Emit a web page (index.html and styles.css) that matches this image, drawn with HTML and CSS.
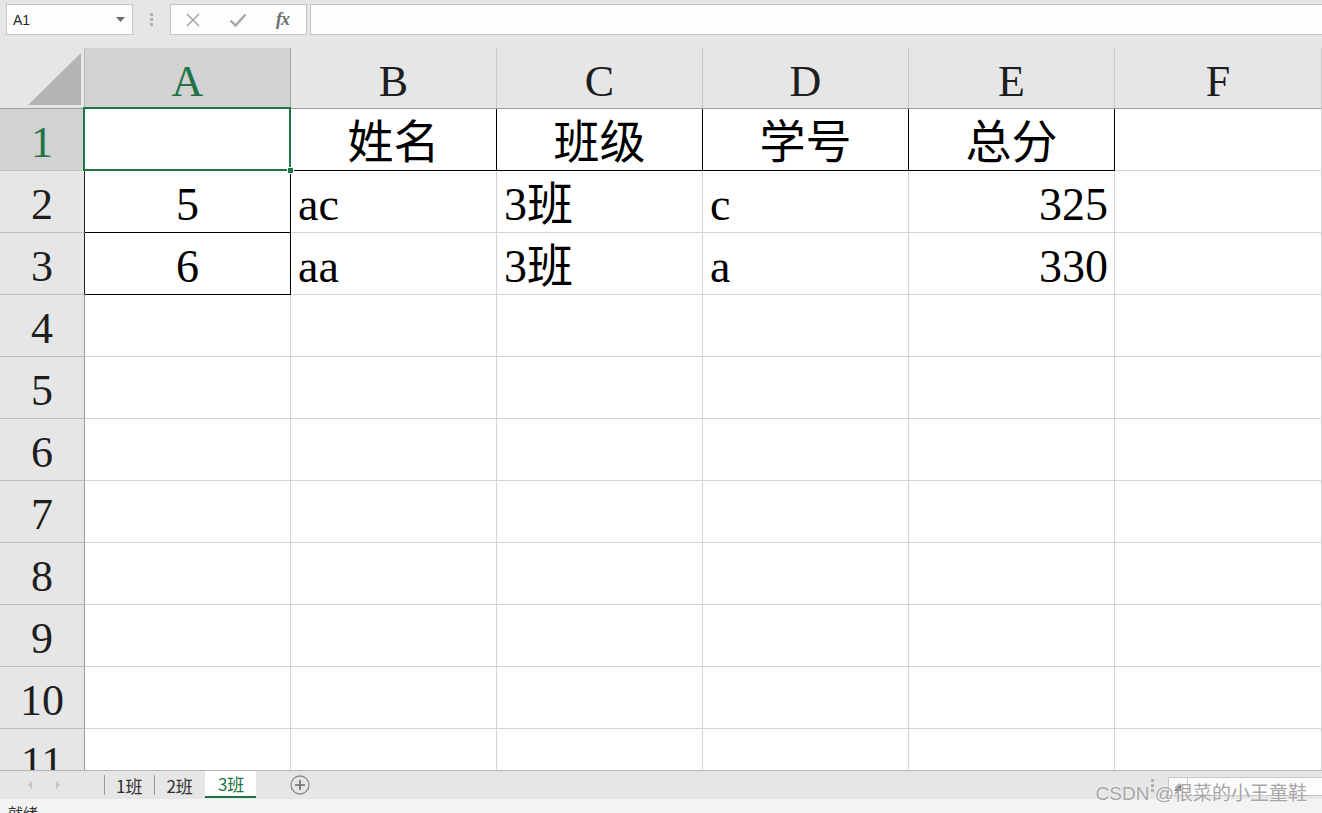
FILE: index.html
```html
<!DOCTYPE html>
<html lang="zh">
<head>
<meta charset="utf-8">
<title>Excel</title>
<link rel="stylesheet" href="styles.css">
</head>
<body>
<div class="app">
  <div class="toolbar">
    <div class="namebox">
      <span class="name">A1</span>
      <svg class="dd" width="9" height="5" viewBox="0 0 9 5"><path d="M0 0 H9 L4.5 5 Z" fill="#6b6b6b"/></svg>
    </div>
    <div class="grip"><i></i><i></i><i></i></div>
    <div class="fxbox">
      <svg width="16" height="16" viewBox="0 0 16 16"><path d="M2 2 L14 14 M14 2 L2 14" stroke="#a6a6a6" stroke-width="1.6" fill="none"/></svg>
      <svg width="18" height="16" viewBox="0 0 18 16"><path d="M1.5 8.5 L6.5 13.5 L16.5 2.5" stroke="#a6a6a6" stroke-width="2.4" fill="none"/></svg>
      <span class="fx">fx</span>
    </div>
    <div class="formula"></div>
  </div>

  <div class="sheet">
    <div class="corner"><svg width="84" height="61" viewBox="0 0 84 61"><polygon points="28,57 81,57 81,5" fill="#b4b4b4"/></svg></div>
    <div class="ch ch-sel">A</div><div class="ch">B</div><div class="ch">C</div><div class="ch">D</div><div class="ch">E</div><div class="ch">F</div>

    <div class="rh rh-sel">1</div>
    <div class="c a1 bk-b"><div class="sel"><div class="handle"></div></div></div>
    <div class="c center bk-r bk-b">姓名</div><div class="c center bk-r bk-b">班级</div><div class="c center bk-r bk-b">学号</div><div class="c center bk-r bk-b">总分</div><div class="c"></div>

    <div class="rh rh-bk">2</div>
    <div class="c center bk-r bk-b">5</div><div class="c">ac</div><div class="c">3班</div><div class="c">c</div><div class="c ra">325</div><div class="c"></div>

    <div class="rh rh-bk">3</div>
    <div class="c center bk-r bk-b">6</div><div class="c">aa</div><div class="c">3班</div><div class="c">a</div><div class="c ra">330</div><div class="c"></div>

    <div class="rh">4</div><div class="c"></div><div class="c"></div><div class="c"></div><div class="c"></div><div class="c"></div><div class="c"></div>
    <div class="rh">5</div><div class="c"></div><div class="c"></div><div class="c"></div><div class="c"></div><div class="c"></div><div class="c"></div>
    <div class="rh">6</div><div class="c"></div><div class="c"></div><div class="c"></div><div class="c"></div><div class="c"></div><div class="c"></div>
    <div class="rh">7</div><div class="c"></div><div class="c"></div><div class="c"></div><div class="c"></div><div class="c"></div><div class="c"></div>
    <div class="rh">8</div><div class="c"></div><div class="c"></div><div class="c"></div><div class="c"></div><div class="c"></div><div class="c"></div>
    <div class="rh">9</div><div class="c"></div><div class="c"></div><div class="c"></div><div class="c"></div><div class="c"></div><div class="c"></div>
    <div class="rh">10</div><div class="c"></div><div class="c"></div><div class="c"></div><div class="c"></div><div class="c"></div><div class="c"></div>
    <div class="rh">11</div><div class="c"></div><div class="c"></div><div class="c"></div><div class="c"></div><div class="c"></div><div class="c"></div>
  </div>

  <div class="tabbar">
    <div class="nav">
      <svg width="8" height="10" viewBox="0 0 8 10"><path d="M6 1 L2 5 L6 9 Z" fill="#c4c4c4"/></svg>
      <svg width="8" height="10" viewBox="0 0 8 10"><path d="M2 1 L6 5 L2 9 Z" fill="#c4c4c4"/></svg>
    </div>
    <span class="sep"></span>
    <div class="tab">1班</div>
    <span class="sep"></span>
    <div class="tab">2班</div>
    <div class="tab active">3班</div>
    <svg class="plus" width="20" height="20" viewBox="0 0 20 20"><circle cx="10" cy="10" r="9" fill="none" stroke="#8a8a8a" stroke-width="1.3"/><path d="M10 5 V15 M5 10 H15" stroke="#6a6a6a" stroke-width="1.6"/></svg>
    <div class="tabtail">
      <div class="vgrip"><i></i><i></i><i></i></div>
      <div class="hscroll">
        <div class="hbtn"><svg width="8" height="8" viewBox="0 0 8 8"><path d="M7 0 L7 7 L0 7 Z" fill="#555"/></svg></div>
      </div>
    </div>
    <div class="watermark">CSDN @很菜的小王童鞋</div>
  </div>

  <div class="status">就绪</div>
</div>
</body>
</html>
```

FILE: styles.css
```css
* { box-sizing: border-box; }
html, body { margin: 0; padding: 0; }
body {
  background: #e6e6e6;
  font-family: "Liberation Sans", "Noto Sans CJK SC", sans-serif;
  width: 1322px;
  height: 813px;
  overflow: hidden;
}
.app { display: flex; flex-direction: column; height: 813px; }

/* toolbar */
.toolbar {
  height: 48px;
  display: flex;
  align-items: flex-start;
  padding: 4px 0 0 6px;
  flex: none;
}
.namebox {
  width: 127px;
  height: 31px;
  background: #fdfdfd;
  border: 1px solid #c6c6c6;
  display: flex;
  align-items: center;
  justify-content: space-between;
  padding: 0 7px 0 6px;
}
.name { font-size: 14px; color: #262626; }
.grip {
  width: 37px;
  height: 31px;
  display: flex;
  flex-direction: column;
  align-items: center;
  justify-content: center;
  gap: 2px;
}
.grip i, .vgrip i { display: block; width: 3px; height: 3px; background: #b0b0b0; }
.fxbox {
  width: 137px;
  height: 31px;
  background: #fdfdfd;
  border: 1px solid #c6c6c6;
  display: flex;
  align-items: center;
  gap: 28px;
  padding-left: 14px;
}
.fx {
  font-family: "Liberation Serif", serif;
  font-style: italic;
  font-weight: bold;
  font-size: 18px;
  color: #6e6e6e;
  margin-left: 1px;
  letter-spacing: -1px;
}
.formula {
  flex: 1;
  height: 31px;
  margin-left: 3px;
  margin-right: -2px;
  background: #fdfdfd;
  border: 1px solid #c6c6c6;
}

/* sheet */
.sheet {
  flex: none;
  height: 722px;
  overflow: hidden;
  display: grid;
  grid-template-columns: 85px repeat(5, 206px) 1fr;
  grid-template-rows: 61px repeat(11, 62px);
  background: #fff;
  font-family: "Liberation Serif", "Noto Sans CJK SC", serif;
}
.corner {
  background: #e6e6e6;
  border-right: 1px solid #b8b8b8;
  border-bottom: 1px solid #9e9e9e;
}
.corner svg { display: block; }
.ch {
  background: #e6e6e6;
  border-right: 1px solid #c8c8c8;
  border-bottom: 1px solid #9e9e9e;
  display: flex;
  align-items: flex-end;
  justify-content: center;
  font-size: 44px;
  line-height: 1;
  padding-bottom: 4px;
  color: #1e1e1e;
}
.ch-sel { background: #d2d2d2; color: #217346; border-right-color: #a8a8a8; }
.rh {
  background: #e6e6e6;
  border-right: 1px solid #9e9e9e;
  border-bottom: 1px solid #c0c0c0;
  display: flex;
  align-items: flex-end;
  justify-content: center;
  font-size: 44px;
  line-height: 1;
  padding-bottom: 5px;
  color: #1e1e1e;
}
.rh-sel { background: #d2d2d2; color: #217346; }
.rh-bk { border-right-color: #222; }
.c {
  border-right: 1px solid #d4d4d4;
  border-bottom: 1px solid #d4d4d4;
  display: flex;
  align-items: flex-end;
  font-size: 46px;
  line-height: 1;
  padding: 0 6px 4px 7px;
  color: #000;
  white-space: nowrap;
}
.c.center { justify-content: center; padding-left: 0; padding-right: 0; }
.c.ra { justify-content: flex-end; }
.bk-r { border-right-color: #000; }
.bk-b { border-bottom-color: #000; }
.a1 { position: relative; }
.sel {
  position: absolute;
  top: -2px;
  left: -2px;
  right: -1px;
  bottom: -1px;
  border: 2px solid #217346;
  z-index: 2;
}
.handle {
  position: absolute;
  right: -5px;
  bottom: -5px;
  width: 7px;
  height: 7px;
  background: #217346;
  border: 1px solid #fff;
}

/* tab bar */
.tabbar {
  position: relative;
  flex: none;
  height: 29px;
  border-top: 1px solid #b4b4b4;
  display: flex;
  align-items: stretch;
  font-family: "Noto Sans CJK SC", "Liberation Sans", sans-serif;
  font-size: 17px;
}
.nav {
  width: 104px;
  display: flex;
  align-items: center;
  gap: 20px;
  padding-left: 26px;
}
.sep {
  width: 1px;
  align-self: center;
  height: 20px;
  background: #9a9a9a;
}
.tab {
  padding: 0 12px 0 11px;
  display: flex;
  align-items: center;
  color: #303030;
  line-height: 1;
}
.tab.active {
  background: #fff;
  color: #217346;
  border-bottom: 2px solid #217346;
  padding: 0 12px 0 13px;
  margin-bottom: 1px;
}
.plus { align-self: center; margin-left: 34px; }
.tabtail {
  margin-left: auto;
  display: flex;
  align-items: center;
  gap: 14px;
}
.vgrip { display: flex; flex-direction: column; gap: 2px; }
.hscroll {
  width: 156px;
  height: 19px;
  margin-top: 2px;
  margin-right: -2px;
  background: #fdfdfd;
  border: 1px solid #c6c6c6;
  display: flex;
}
.hbtn {
  width: 19px;
  border-right: 1px solid #c6c6c6;
  display: flex;
  align-items: flex-end;
  justify-content: center;
  padding-bottom: 3px;
}
.watermark {
  position: absolute;
  right: 15px;
  top: 13px;
  font-size: 19px;
  line-height: 1;
  color: #a6a6a6;
  font-family: "Liberation Sans", "Noto Sans CJK SC", sans-serif;
  text-shadow: 0 0 2px #fff;
  white-space: nowrap;
}

/* status bar */
.status {
  flex: none;
  height: 15px;
  background: #f3f3f3;
  overflow: hidden;
  padding: 6px 0 0 8px;
  font-family: "Noto Sans CJK SC", sans-serif;
  font-size: 15px;
  line-height: 1;
  color: #333;
}
```
